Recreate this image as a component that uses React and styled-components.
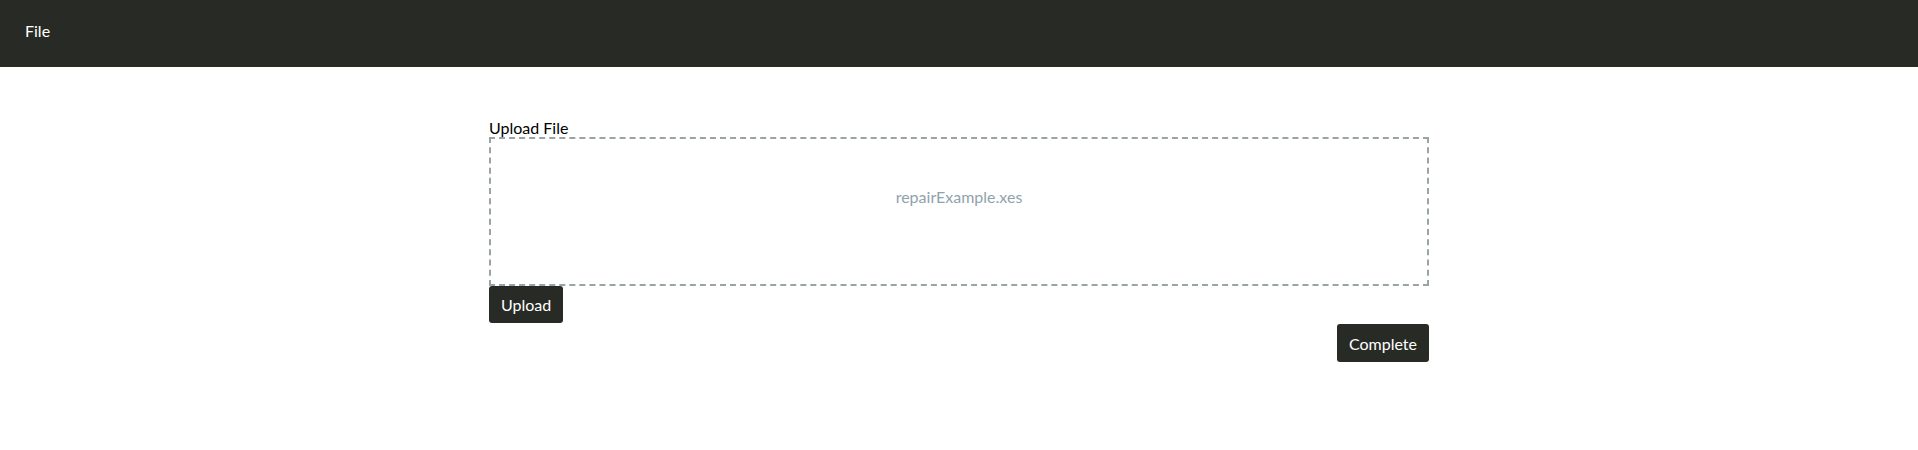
import React from 'react';
import styled, { createGlobalStyle } from 'styled-components';

const GlobalStyle = createGlobalStyle`
  body {
    margin: 0;
    background: #fff;
    font-family: Lato, "Liberation Sans", sans-serif;
    color: #000;
  }
`;

const TopBar = styled.header`
  height: 67px;
  background-color: #282a25;
  display: flex;
  align-items: flex-start;
  padding: 21px 25px 0;
  box-sizing: border-box;
`;

const MenuItem = styled.span`
  color: #fff;
  font-size: 16px;
  line-height: 19px;
  cursor: pointer;
`;

const Main = styled.main`
  max-width: 940px;
  margin: 0 auto;
  padding-top: 52px;
`;

const Label = styled.div`
  font-size: 16px;
  line-height: 18px;
`;

const DropZone = styled.div`
  height: 149px;
  border: 2px dashed #9aa3a5;
  display: flex;
  justify-content: center;
  padding-top: 48px;
  box-sizing: border-box;
`;

const FileName = styled.span`
  color: #8fa3ad;
  font-size: 16px;
`;

const Button = styled.button`
  background-color: #282a25;
  color: #fff;
  border: none;
  border-radius: 3px;
  font-family: Lato, "Liberation Sans", sans-serif;
  font-size: 16px;
  height: ${(p) => p.$h || 37}px;
  padding: 0 12px;
  cursor: pointer;
`;

const Actions = styled.div`
  display: flex;
  justify-content: flex-end;
  margin-top: 1px;
`;

export default function App() {
  return (
    <>
      <GlobalStyle />
      <TopBar>
        <MenuItem>File</MenuItem>
      </TopBar>
      <Main>
        <Label>Upload File</Label>
        <DropZone>
          <FileName>repairExample.xes</FileName>
        </DropZone>
        <Button>Upload</Button>
        <Actions>
          <Button $h={38}>Complete</Button>
        </Actions>
      </Main>
    </>
  );
}
